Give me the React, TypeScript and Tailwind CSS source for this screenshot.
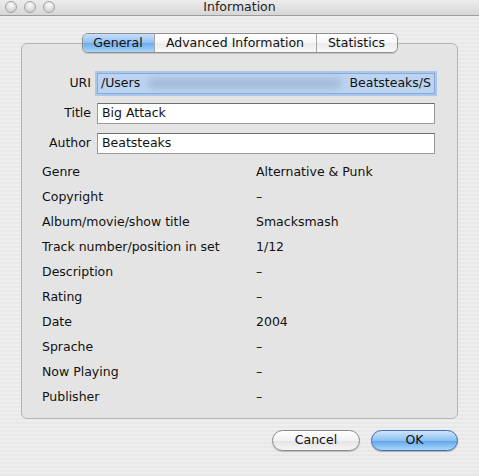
import React from 'react';

const rows: [string, string][] = [
  ['Genre', 'Alternative & Punk'],
  ['Copyright', '–'],
  ['Album/movie/show title', 'Smacksmash'],
  ['Track number/position in set', '1/12'],
  ['Description', '–'],
  ['Rating', '–'],
  ['Date', '2004'],
  ['Sprache', '–'],
  ['Now Playing', '–'],
  ['Publisher', '–'],
];

const Light: React.FC = () => (
  <div className="w-[12px] h-[12px] rounded-full border border-[#a4a4a4] bg-[radial-gradient(circle_at_50%_30%,#fdfdfd,#d4d4d4_70%,#c4c4c4)]" />
);

const App: React.FC = () => {
  return (
    <div className="w-[479px] h-[476px] overflow-hidden flex flex-col bg-[repeating-linear-gradient(180deg,#eeeeee_0px,#eeeeee_2px,#e8e8e8_2px,#e8e8e8_4px)] font-['DejaVu_Sans',Verdana,sans-serif] text-[12.5px] text-[#111]">
      {/* Title bar */}
      <div className="relative h-[16px] flex items-center justify-center border-b border-[#9c9c9c] bg-[linear-gradient(180deg,#ececec,#d6d6d6)]">
        <div className="absolute left-[5px] top-[1px] flex gap-[7px]">
          <Light />
          <Light />
          <Light />
        </div>
        <span className="text-[12.5px] leading-none text-[#222]">Information</span>
      </div>

      {/* Tabs */}
      <div className="flex justify-center mt-[17px] relative z-10 -mb-[10px]">
        <div className="flex h-[20px] rounded-[6px] border border-[#8e8e8e] overflow-hidden shadow-[0_1px_1px_rgba(0,0,0,0.15)]">
          <div className="w-[71px] flex items-center justify-center bg-[linear-gradient(180deg,#c6e0fa_0%,#8ec0f2_50%,#6eacec_51%,#a8d4fb_100%)]">
            General
          </div>
          <div className="w-[162px] flex items-center justify-center border-l border-[#a8a8a8] bg-[linear-gradient(180deg,#ffffff_0%,#f6f6f6_50%,#ebebeb_51%,#f8f8f8_100%)]">
            Advanced Information
          </div>
          <div className="w-[81px] flex items-center justify-center border-l border-[#a8a8a8] bg-[linear-gradient(180deg,#ffffff_0%,#f6f6f6_50%,#ebebeb_51%,#f8f8f8_100%)]">
            Statistics
          </div>
        </div>
      </div>

      {/* Panel */}
      <div className="mx-[21px] h-[376px] rounded-[6px] border border-[#b4b4b4] bg-[#e4e4e4] pt-[29px] px-[20px] pb-[10px] flex flex-col">
        <div className="flex flex-col gap-[9px]">
          <div className="flex items-center">
            <div className="w-[55px] text-right pr-[6px]">URI</div>
            <div className="w-[338px] h-[21px] flex items-center overflow-hidden whitespace-nowrap bg-[#bcd4f2] border border-[#8da9cf] shadow-[0_0_0_2px_#a9c8ee] px-[3px]">
              <span>/Users</span>
              <span className="flex-1 mx-[8px] h-[11px] rounded-full bg-[#a5bcd9] blur-[3px]" />
              <span>Beatsteaks/S</span>
            </div>
          </div>
          <div className="flex items-center">
            <div className="w-[55px] text-right pr-[6px]">Title</div>
            <div className="w-[338px] h-[21px] flex items-center bg-white border border-[#9a9a9a] border-t-[#6e6e6e] px-[4px]">
              Big Attack
            </div>
          </div>
          <div className="flex items-center">
            <div className="w-[55px] text-right pr-[6px]">Author</div>
            <div className="w-[338px] h-[21px] flex items-center bg-white border border-[#9a9a9a] border-t-[#6e6e6e] px-[4px]">
              Beatsteaks
            </div>
          </div>
        </div>

        <div className="flex flex-col mt-[6px]">
          {rows.map(([label, value]) => (
            <div key={label} className="h-[25px] flex items-center">
              <div className="w-[214px]">{label}</div>
              <div>{value}</div>
            </div>
          ))}
        </div>
      </div>

      {/* Buttons */}
      <div className="flex justify-end gap-[11px] pr-[21px] mt-[11px]">
        <button className="w-[88px] h-[21px] rounded-full border border-[#8a8a8a] bg-[linear-gradient(180deg,#ffffff_0%,#f2f2f2_50%,#e2e2e2_51%,#f6f6f6_100%)] shadow-[0_1px_1px_rgba(0,0,0,0.2)] flex items-center justify-center">
          Cancel
        </button>
        <button className="w-[87px] h-[21px] rounded-full border border-[#3d6cb0] bg-[linear-gradient(180deg,#cfe5fb_0%,#8cc0f3_50%,#5fa3ea_51%,#a9d7fc_100%)] shadow-[0_1px_1px_rgba(0,0,0,0.25)] flex items-center justify-center">
          OK
        </button>
      </div>
    </div>
  );
};

export default App;
